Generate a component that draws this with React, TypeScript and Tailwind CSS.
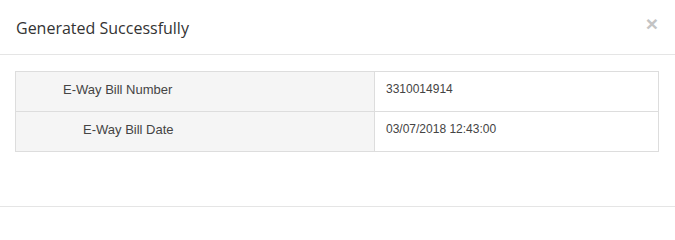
import React from "react";

export default function App() {
  return (
    <div className="w-[675px] h-[209px] bg-white overflow-hidden">
      <div className="h-[55px] border-b border-[#e5e5e5] flex items-center justify-between pl-[16px] pr-[17px]">
        <h4 className="text-[16px] text-[#333] font-['Open_Sans',sans-serif] leading-none pt-[2px]">
          Generated Successfully
        </h4>
        <span className="text-[21px] font-bold leading-none text-[#c4c4c4] font-['Liberation_Sans',Arial,sans-serif] pb-[8px]">
          ×
        </span>
      </div>
      <div className="h-[152px] border-b border-[#e5e5e5] pt-[16px] pl-[15px] pr-[16px] font-['Liberation_Sans',Arial,sans-serif] text-[13px] text-[#444]">
        <div className="border border-[#ddd] grid grid-cols-[359px_1fr]">
          <div className="h-[40px] bg-[#f5f5f5] border-r border-b border-[#ddd] pt-[8px] pl-[47px] leading-[19px]">
            E-Way Bill Number
          </div>
          <div className="h-[40px] border-b border-[#ddd] pt-[8px] pl-[11px] leading-[19px] text-[12px]">
            3310014914
          </div>
          <div className="h-[39px] bg-[#f5f5f5] border-r border-[#ddd] pt-[8px] pl-[67px] leading-[19px]">
            E-Way Bill Date
          </div>
          <div className="h-[39px] pt-[8px] pl-[11px] leading-[19px] text-[12px]">
            03/07/2018 12:43:00
          </div>
        </div>
      </div>
    </div>
  );
}
